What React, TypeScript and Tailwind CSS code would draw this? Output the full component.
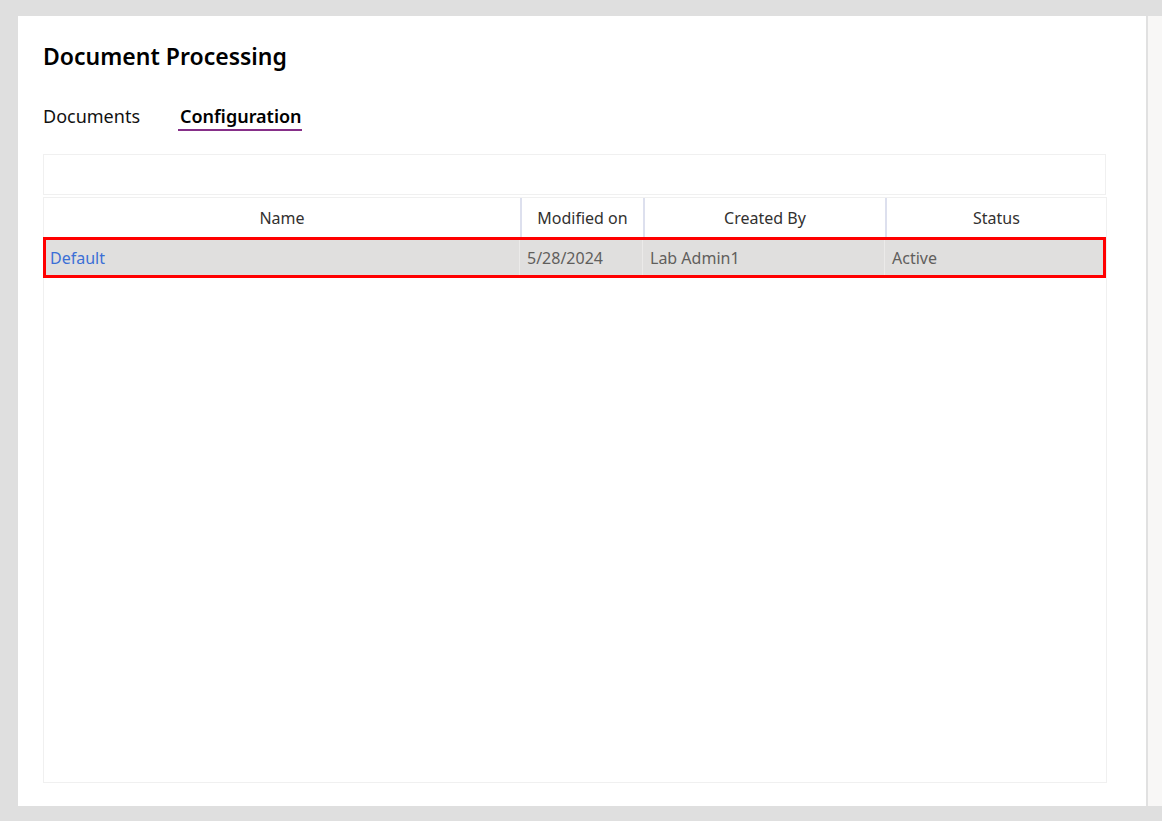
const cols = [
  { key: 'name', label: 'Name', width: 'w-[476px]' },
  { key: 'modified', label: 'Modified on', width: 'w-[123px]' },
  { key: 'createdBy', label: 'Created By', width: 'w-[242px]' },
  { key: 'status', label: 'Status', width: 'flex-1' },
];

const rows = [
  { name: 'Default', modified: '5/28/2024', createdBy: 'Lab Admin1', status: 'Active' },
];

export default function App() {
  return (
    <div
      className="min-h-screen w-full bg-[#dfdfdf] pt-4 pl-[18px] flex"
      style={{ fontFamily: '"Noto Sans", "Open Sans", sans-serif' }}
    >
      <div className="w-[1128px] h-[790px] bg-white pl-[25px] pt-[24px] flex flex-col">
        <h1 className="text-[23px] leading-8 font-semibold text-black">Document Processing</h1>

        <div className="flex items-start gap-[38px] mt-[32px] text-[18px] leading-6">
          <div className="text-[#111]">Documents</div>
          <div className="pb-[1px] border-b-2 border-[#862f88] pl-[2px] font-semibold text-black">Configuration</div>
        </div>

        <div className="mt-[23px] w-[1063px] h-[41px] border border-[#f0f0f0]" />

        <div className="mt-[2px] w-[1064px] h-[586px] border border-[#f0f0f0] flex flex-col">
          <div className="flex h-[39px] text-[16px] text-[#323130]">
            {cols.map((c, i) => (
              <div
                key={c.key}
                className={`${c.width} flex items-center justify-center ${i > 0 ? 'border-l-2 border-[#dde0ee]' : ''}`}
              >
                {c.label}
              </div>
            ))}
          </div>
          {rows.map((r) => (
            <div
              key={r.name}
              className="-ml-px w-[1063px] h-[41px] flex border-[3px] border-[#ff0000] bg-[#e0dfde] text-[16px] text-[#605e5c]"
            >
              <div className="w-[473px] flex items-center pl-1 text-[#3b6fd6]">{r.name}</div>
              <div className="w-[123px] flex items-center pl-[7px] border-l border-[#ebeae9]">{r.modified}</div>
              <div className="w-[242px] flex items-center pl-[7px] border-l border-[#ebeae9]">{r.createdBy}</div>
              <div className="flex-1 flex items-center pl-[7px] border-l border-[#ebeae9]">{r.status}</div>
            </div>
          ))}
        </div>
      </div>
      <div className="w-[2px] h-[790px] bg-[#e1e1e1]" />
      <div className="flex-1 h-[790px] bg-[#f8f7f6]" />
    </div>
  );
}
